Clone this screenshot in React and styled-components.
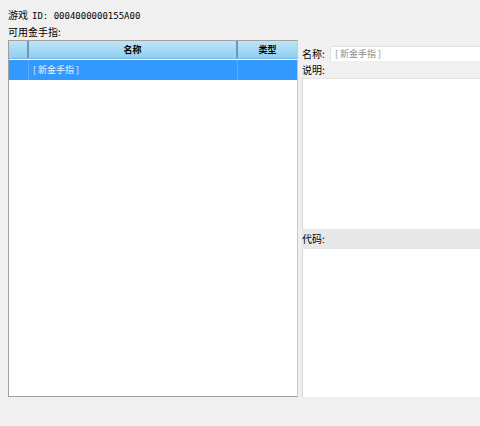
import React from 'react';
import styled, { createGlobalStyle } from 'styled-components';

const GlobalStyle = createGlobalStyle`
  html, body {
    margin: 0;
    padding: 0;
    background: #f0f0f0;
  }
  body {
    font-family: "Noto Sans CJK SC", "Liberation Sans", sans-serif;
    font-size: 10px;
    color: #000;
  }
`;

const Window = styled.div`
  width: 480px;
  height: 426px;
  overflow: hidden;
  display: flex;
  flex-direction: column;
  background: #f0f0f0;
`;

const GameId = styled.div`
  padding: 7px 0 0 8px;
  height: 15px;
  line-height: 15px;
  font-size: 10px;

  span {
    font-family: "DejaVu Sans Mono", "Liberation Mono", monospace;
    font-size: 9px;
    margin-left: 4px;
  }
`;

const Caption = styled.div`
  margin-top: 2px;
  padding-left: 8px;
  height: 16px;
  line-height: 16px;
  font-size: 10px;
`;

const Body = styled.div`
  display: flex;
  height: 357px;
`;

const Table = styled.div`
  width: 288px;
  margin-left: 8px;
  border: 1px solid #a0a0a0;
  border-right-color: #c8c8c8;
  background: #fff;
  display: flex;
  flex-direction: column;
`;

const HeaderRow = styled.div`
  display: grid;
  grid-template-columns: 20px 209px 1fr;
  height: 17px;
  background: linear-gradient(#bfe4f8, #8dd0f2);
  border-bottom: 1px solid #7fb4d6;
`;

const HeadCell = styled.div`
  border-right: ${p => (p.$last ? 'none' : '2px solid #6e98b6')};
  text-align: center;
  line-height: 17px;
  font-size: 9px;
  font-weight: bold;
`;

const DataRow = styled.div`
  display: grid;
  grid-template-columns: 20px 209px 1fr;
  height: 20px;
  margin-top: 1px;
  background: ${p => (p.$selected ? '#3399ff' : '#fff')};
  color: ${p => (p.$selected ? '#eaf4ff' : '#000')};
`;

const Cell = styled.div`
  padding-left: 4px;
  line-height: 20px;
  font-size: 9px;
  border-right: ${p => (p.$divider ? '1px solid #5caaf5' : 'none')};
`;

const Detail = styled.div`
  flex: 1;
  margin-left: 4px;
  display: flex;
  flex-direction: column;
`;

const FieldRow = styled.div`
  display: flex;
  align-items: center;
  height: 15px;
  margin-top: 6px;
`;

const Label = styled.div`
  font-size: 10px;
  line-height: 15px;
  width: 28px;
  flex-shrink: 0;
`;

const NameInput = styled.div`
  flex: 1;
  height: 14px;
  line-height: 14px;
  background: #fff;
  border: 1px solid #e2e2e2;
  border-right: none;
  color: #8a8a8a;
  font-size: 9px;
  padding-left: 4px;
`;

const Band = styled.div`
  height: ${p => p.$h}px;
  line-height: ${p => p.$h}px;
  background: ${p => (p.$shade ? '#e8e8e8' : '#f0f0f0')};
  font-size: 10px;
`;

const TextBox = styled.div`
  height: ${p => p.$h}px;
  background: #fff;
  border-left: 1px solid #d8d8d8;
  border-top: 1px solid #e4e4e4;
`;

export default function App() {
  return (
    <>
      <GlobalStyle />
      <Window>
        <GameId>
          游戏<span>ID: 0004000000155A00</span>
        </GameId>
        <Caption>可用金手指:</Caption>
        <Body>
          <Table>
            <HeaderRow>
              <HeadCell />
              <HeadCell>名称</HeadCell>
              <HeadCell $last>类型</HeadCell>
            </HeaderRow>
            <DataRow $selected>
              <Cell $divider />
              <Cell $divider>[ 新金手指 ]</Cell>
              <Cell />
            </DataRow>
          </Table>
          <Detail>
            <FieldRow>
              <Label>名称:</Label>
              <NameInput>[ 新金手指 ]</NameInput>
            </FieldRow>
            <Band $h={17}>说明:</Band>
            <TextBox $h={150} />
            <Band $h={19} $shade>代码:</Band>
            <TextBox $h={149} />
          </Detail>
        </Body>
      </Window>
    </>
  );
}
